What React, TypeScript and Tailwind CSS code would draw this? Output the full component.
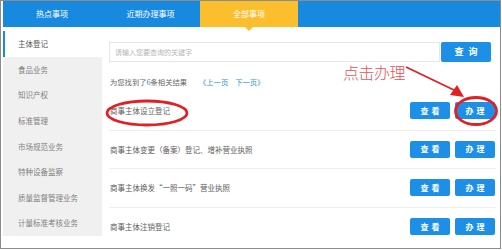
import React from "react";

const font = { fontFamily: '"Noto Sans CJK SC", "Noto Sans", sans-serif' };

const sideItems = [
  "主体登记",
  "食品业务",
  "知识产权",
  "标准管理",
  "市场规范业务",
  "特种设备监察",
  "质量监督管理业务",
  "计量标准考核业务",
];

const rows = [
  "商事主体设立登记",
  "商事主体变更（备案）登记、增补营业执照",
  "商事主体换发“一照一码”营业执照",
  "商事主体注销登记",
];

function Btn({ label }: { label: string }) {
  return (
    <div className="w-[40px] h-[17px] rounded-[2px] bg-[#1e8fe6] text-white text-[8px] font-bold tracking-[3px] flex items-center justify-center pl-[3px]">
      {label}
    </div>
  );
}

export default function App() {
  return (
    <div className="w-[502px] h-[250px] bg-white overflow-hidden" style={font}>
      <div className="relative w-[501px] h-[249px] border border-[#8c8c8c] pl-[2px] overflow-hidden">
        {/* tab bar */}
        <div className="h-[26px] bg-[#178ae0] flex text-white text-[8px]">
          <div className="w-[98px] flex items-center justify-center">热点事项</div>
          <div className="w-[99px] flex items-center justify-center">近期办理事项</div>
          <div className="relative w-[98px] bg-[#fbbf2d] flex items-center justify-center">
            全部事项
            <div className="absolute left-[45px] top-[26px] w-0 h-0 border-l-[4px] border-r-[4px] border-t-[4px] border-l-transparent border-r-transparent border-t-[#fbbf2d]" />
          </div>
        </div>

        {/* body */}
        <div className="flex pt-[4px]">
          <div className="w-[99px] h-[205px] bg-[#f0f0f0] flex flex-col">
            {sideItems.map((s, i) => (
              <div
                key={s}
                className={
                  "h-[25.6px] flex items-center pl-[13px] text-[7.5px] border-l-2 " +
                  (i === 0
                    ? "bg-white border-[#1a8ae0] text-[#555]"
                    : "border-transparent text-[#808080]")
                }
              >
                {s}
              </div>
            ))}
          </div>

          <div className="ml-[7px] w-[387px] flex flex-col">
            <div className="mt-[11px] mr-[5px] flex h-[20px]">
              <div className="flex-1 border border-[#e6e6e6] flex items-center pl-[5px] text-[7px] text-[#b5b5b5]">
                请输入您要查询的关键字
              </div>
              <div className="ml-px w-[50px] rounded-[2px] bg-[#1e8fe6] text-white text-[9px] font-bold tracking-[5px] flex items-center justify-center pl-[5px]">
                查询
              </div>
            </div>

            <div className="mt-[14px] h-[12px] flex items-center text-[7.3px] pl-px">
              <span className="text-[#666]">
                为您找到了<span className="text-[#2f8fe6]">6</span>条相关结果
              </span>
              <span className="ml-[12px] text-[#2f8fe6]">《上一页</span>
              <span className="ml-[7px] text-[#2f8fe6]">下一页》</span>
            </div>

            <div className="mt-[4px] flex flex-col">
              {rows.map((r, i) => (
                <div
                  key={r}
                  className={
                    "flex items-center justify-between h-[38.5px] pl-px " +
                    (i < 3 ? "border-b border-[#eeeeee]" : "")
                  }
                >
                  <span className="text-[7.5px] text-[#606060]">{r}</span>
                  <div className="flex gap-[5px] mr-px">
                    <Btn label="查看" />
                    <Btn label="办理" />
                  </div>
                </div>
              ))}
            </div>
          </div>
        </div>

        {/* annotations */}
        <div className="absolute left-[342px] top-[63px] text-[16px] font-light text-[#ea5055] leading-none tracking-[-0.5px]">
          点击办理
        </div>
        <svg className="absolute left-0 top-0" width="502" height="250" viewBox="0 0 502 250">
          <ellipse cx="146" cy="112" rx="40" ry="12" fill="none" stroke="#e21f25" strokeWidth="2.8" />
          <ellipse cx="475" cy="110" rx="20.5" ry="13.5" fill="none" stroke="#e21f25" strokeWidth="2.8" />
          <line x1="405" y1="66" x2="455" y2="90" stroke="#e21f25" strokeWidth="1.8" />
          <polygon points="463,96 449,94 456,84" fill="#e21f25" />
        </svg>
      </div>
    </div>
  );
}
